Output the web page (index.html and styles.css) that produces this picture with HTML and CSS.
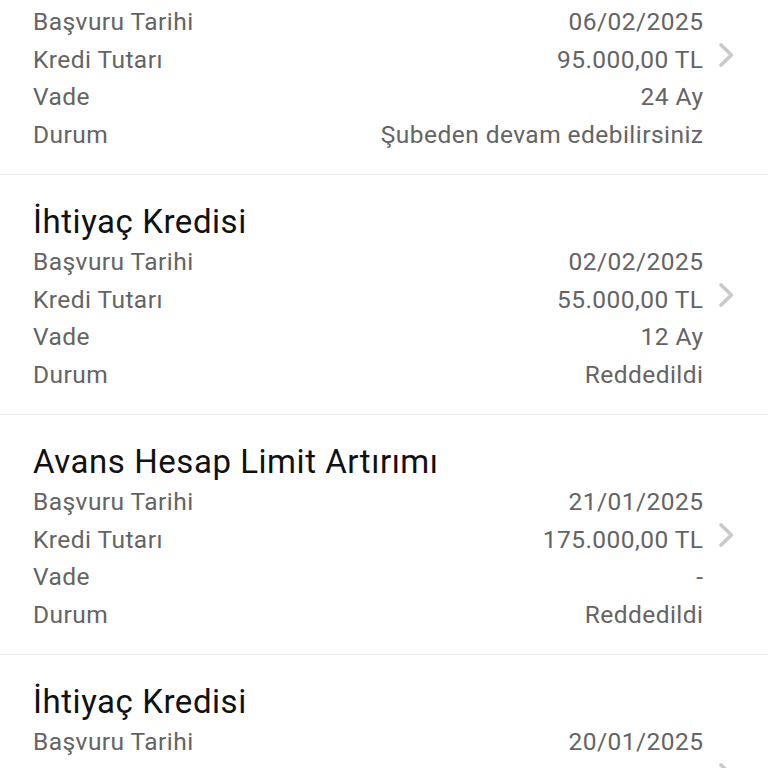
FILE: index.html
```html
<!DOCTYPE html>
<html lang="tr">
<head>
<meta charset="utf-8">
<title>Başvurularım</title>
<link rel="stylesheet" href="styles.css">
</head>
<body>
<div class="list">
  <div class="card">
    <div class="info">
      <div class="title">İhtiyaç Kredisi</div>
      <div class="row"><span>Başvuru Tarihi</span><span>06/02/2025</span></div>
      <div class="row"><span>Kredi Tutarı</span><span>95.000,00 TL</span></div>
      <div class="row"><span>Vade</span><span>24 Ay</span></div>
      <div class="row"><span>Durum</span><span>Şubeden devam edebilirsiniz</span></div>
    </div>
    <div class="chev"><svg width="17" height="26" viewBox="0 0 17 26"><path d="M3 3 L13.5 13 L3 23" fill="none" stroke="#c9c9c9" stroke-width="3.6" stroke-linecap="round" stroke-linejoin="round"/></svg></div>
  </div>
  <div class="card">
    <div class="info">
      <div class="title">İhtiyaç Kredisi</div>
      <div class="row"><span>Başvuru Tarihi</span><span>02/02/2025</span></div>
      <div class="row"><span>Kredi Tutarı</span><span>55.000,00 TL</span></div>
      <div class="row"><span>Vade</span><span>12 Ay</span></div>
      <div class="row"><span>Durum</span><span>Reddedildi</span></div>
    </div>
    <div class="chev"><svg width="17" height="26" viewBox="0 0 17 26"><path d="M3 3 L13.5 13 L3 23" fill="none" stroke="#c9c9c9" stroke-width="3.6" stroke-linecap="round" stroke-linejoin="round"/></svg></div>
  </div>
  <div class="card">
    <div class="info">
      <div class="title">Avans Hesap Limit Artırımı</div>
      <div class="row"><span>Başvuru Tarihi</span><span>21/01/2025</span></div>
      <div class="row"><span>Kredi Tutarı</span><span>175.000,00 TL</span></div>
      <div class="row"><span>Vade</span><span>-</span></div>
      <div class="row"><span>Durum</span><span>Reddedildi</span></div>
    </div>
    <div class="chev"><svg width="17" height="26" viewBox="0 0 17 26"><path d="M3 3 L13.5 13 L3 23" fill="none" stroke="#c9c9c9" stroke-width="3.6" stroke-linecap="round" stroke-linejoin="round"/></svg></div>
  </div>
  <div class="card">
    <div class="info">
      <div class="title">İhtiyaç Kredisi</div>
      <div class="row"><span>Başvuru Tarihi</span><span>20/01/2025</span></div>
      <div class="row"><span>Kredi Tutarı</span><span>40.000,00 TL</span></div>
      <div class="row"><span>Vade</span><span>12 Ay</span></div>
      <div class="row"><span>Durum</span><span>Reddedildi</span></div>
    </div>
    <div class="chev"><svg width="17" height="26" viewBox="0 0 17 26"><path d="M3 3 L13.5 13 L3 23" fill="none" stroke="#c9c9c9" stroke-width="3.6" stroke-linecap="round" stroke-linejoin="round"/></svg></div>
  </div>
</div>
</body>
</html>
```
FILE: styles.css
```css
html, body {
  margin: 0;
  padding: 0;
  background: #ffffff;
  overflow: hidden;
}
body {
  font-family: Roboto, "Noto Sans", sans-serif;
  height: 768px;
}
.list {
  margin-top: -65px;
}
.card {
  display: flex;
  align-items: center;
  border-bottom: 1px solid #ebebeb;
}
.info {
  flex: 1;
  padding: 27px 0 20.75px 33px;
}
.title {
  font-size: 33px;
  line-height: 40px;
  letter-spacing: 0.55px;
  color: #111111;
  margin-bottom: 1.25px;
}
.row {
  display: flex;
  justify-content: space-between;
  font-size: 24.5px;
  line-height: 37.5px;
  letter-spacing: 0.45px;
  color: #646464;
}
.row span:last-child {
  margin-right: -0.45px;
}
.chev {
  width: 65px;
  padding-left: 15px;
  box-sizing: border-box;
  display: flex;
  align-items: center;
}
.chev svg {
  display: block;
}
```
